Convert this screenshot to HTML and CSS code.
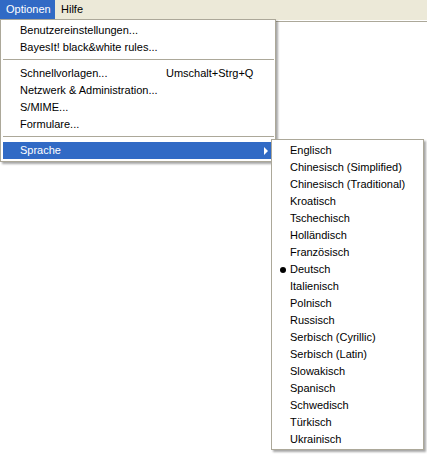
FILE: index.html
```html
<!DOCTYPE html>
<html lang="de">
<head>
<meta charset="utf-8">
<title>Optionen</title>
<link rel="stylesheet" href="styles.css">
</head>
<body>
<div class="window">
  <div class="menubar">
    <div class="bar-item active">Optionen</div>
    <div class="bar-item">Hilfe</div>
  </div>
  <div class="content"></div>

  <div class="menu main-menu">
    <div class="item">Benutzereinstellungen...</div>
    <div class="item">BayesIt! black&amp;white rules...</div>
    <div class="sep"></div>
    <div class="item with-key"><span>Schnellvorlagen...</span><span class="key">Umschalt+Strg+Q</span></div>
    <div class="item">Netzwerk &amp; Administration...</div>
    <div class="item">S/MIME...</div>
    <div class="item">Formulare...</div>
    <div class="sep"></div>
    <div class="item selected has-sub">Sprache<span class="arrow"></span>
      <div class="menu sub-menu">
        <div class="sub-item">Englisch</div>
        <div class="sub-item">Chinesisch (Simplified)</div>
        <div class="sub-item">Chinesisch (Traditional)</div>
        <div class="sub-item">Kroatisch</div>
        <div class="sub-item">Tschechisch</div>
        <div class="sub-item">Holländisch</div>
        <div class="sub-item">Französisch</div>
        <div class="sub-item checked">Deutsch</div>
        <div class="sub-item">Italienisch</div>
        <div class="sub-item">Polnisch</div>
        <div class="sub-item">Russisch</div>
        <div class="sub-item">Serbisch (Cyrillic)</div>
        <div class="sub-item">Serbisch (Latin)</div>
        <div class="sub-item">Slowakisch</div>
        <div class="sub-item">Spanisch</div>
        <div class="sub-item">Schwedisch</div>
        <div class="sub-item">Türkisch</div>
        <div class="sub-item">Ukrainisch</div>
      </div>
    </div>
  </div>
</div>
</body>
</html>
```

FILE: styles.css
```css
html, body {
  margin: 0;
  padding: 0;
  background: #ffffff;
}

body {
  font-family: "Liberation Sans", Arial, sans-serif;
  font-size: 11px;
  color: #000000;
}

.window {
  position: relative;
  width: 427px;
  height: 454px;
  overflow: hidden;
  background: #ffffff;
}

.menubar {
  display: flex;
  height: 20px;
  background: #ece9d8;
  border-bottom: 1px solid #ffffff;
  box-shadow: 0 1px 0 #aca899;
}

.bar-item {
  height: 19px;
  line-height: 18px;
  padding: 0 6px 0 6px;
}

.bar-item.active {
  background: #316ac5;
  color: #ffffff;
  width: 44px;
  padding: 0 5px 0 6px;
}

.menu {
  position: absolute;
  box-sizing: border-box;
  background: #ffffff;
  border: 1px solid #aca899;
  box-shadow: 2px 2px 2px rgba(0, 0, 0, 0.35);
}

.main-menu {
  left: 0;
  top: 19px;
  width: 276px;
  padding: 2px 0;
}

.item {
  position: relative;
  height: 17px;
  line-height: 17px;
  padding-left: 17px;
  margin: 0 1px 0 2px;
  white-space: nowrap;
}

.with-key {
  display: grid;
  grid-template-columns: 146px auto;
}

.sep {
  height: 9px;
  margin: 0 1px 0 2px;
  position: relative;
}

.sep::before {
  content: "";
  position: absolute;
  left: 0;
  right: 0;
  top: 3px;
  border-top: 1px solid #aca899;
  border-bottom: 1px solid #ffffff;
}

.item.selected {
  background: #316ac5;
  color: #ffffff;
}

.arrow {
  position: absolute;
  left: 261px;
  top: 5px;
  width: 0;
  height: 0;
  border-left: 4px solid #ffffff;
  border-top: 4px solid transparent;
  border-bottom: 4px solid transparent;
}

.sub-menu {
  left: 268px;
  top: -3px;
  width: 153px;
  padding: 2px 0 1px 0;
  color: #000000;
}

.sub-item {
  position: relative;
  height: 17px;
  line-height: 17px;
  padding-left: 18px;
  white-space: nowrap;
}

.sub-item.checked::before {
  content: "";
  position: absolute;
  left: 8px;
  top: 6px;
  width: 6px;
  height: 6px;
  border-radius: 50%;
  background: #000000;
}
```
